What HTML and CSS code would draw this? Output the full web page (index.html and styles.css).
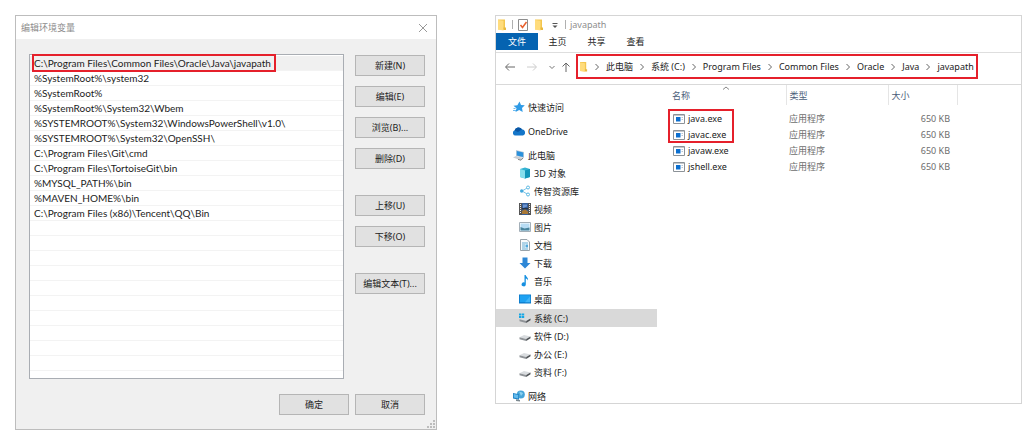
FILE: index.html
```html
<!DOCTYPE html>
<html lang="zh-CN">
<head>
<meta charset="utf-8">
<title>编辑环境变量</title>
<link rel="stylesheet" href="styles.css">
</head>
<body>
<svg class="defs" aria-hidden="true">
  <defs>
    <symbol id="folder" viewBox="0 0 12 12">
      <path d="M2 0.500h7v10H2z" fill="#f3c64f"/><path d="M2 1l5.500.8v9.700L2 10.500z" fill="#ffdc7c"/><path d="M7.500 8.500h2.500v2.500H7.500z" fill="#e9b93f"/>
    </symbol>
    <symbol id="drive" viewBox="0 0 12 12">
      <path d="M.5 7.200L5 5l6.500 1.600-4.300 2.400z" fill="#d9dcdf"/><path d="M.5 7.200l6.700 1.800v2L.5 9.200z" fill="#8f9397"/><path d="M7.200 9l4.300-2.400v1.700L7.200 11z" fill="#4c5054"/>
    </symbol>
    <symbol id="exe" viewBox="0 0 12 12">
      <path d="M.5 1.500h11v9H.5z" fill="#fff" stroke="#8c9298"/><path d="M1 2h10v1H1z" fill="#c3c8cc"/><path d="M3 4h4.500v4.500H3z" fill="#0b6fd0"/><path d="M8.500 4.500h1.500M8.500 6.500h1.500" stroke="#b9c6d2"/>
    </symbol>
    <symbol id="chev" viewBox="0 0 6 8"><path d="M1.500 1l3 3-3 3" fill="none" stroke="#666" stroke-width="1"/></symbol>
  </defs>
</svg>
<main class="page">
  <section class="dialog" aria-label="编辑环境变量">
    <header class="dialog-title">
      <h1>编辑环境变量</h1>
      <button class="close" type="button" aria-label="关闭"><svg viewBox="0 0 10 10"><path d="M1 1l8 8M9 1L1 9" stroke="#999" fill="none"/></svg></button>
    </header>
    <div class="dialog-body">
      <ul class="paths">
        <li class="selected"><span class="marked">C:\Program Files\Common Files\Oracle\Java\javapath</span></li>
        <li>%SystemRoot%\system32</li>
        <li>%SystemRoot%</li>
        <li>%SystemRoot%\System32\Wbem</li>
        <li>%SYSTEMROOT%\System32\WindowsPowerShell\v1.0\</li>
        <li>%SYSTEMROOT%\System32\OpenSSH\</li>
        <li>C:\Program Files\Git\cmd</li>
        <li>C:\Program Files\TortoiseGit\bin</li>
        <li>%MYSQL_PATH%\bin</li>
        <li>%MAVEN_HOME%\bin</li>
        <li>C:\Program Files (x86)\Tencent\QQ\Bin</li>
        <li></li><li></li><li></li><li></li><li></li><li></li><li></li><li></li><li></li><li></li>
      </ul>
      <div class="actions">
        <div class="group">
          <button class="btn" type="button">新建(N)</button>
          <button class="btn" type="button">编辑(E)</button>
          <button class="btn" type="button">浏览(B)...</button>
          <button class="btn" type="button">删除(D)</button>
        </div>
        <div class="group">
          <button class="btn" type="button">上移(U)</button>
          <button class="btn" type="button">下移(O)</button>
        </div>
        <div class="group">
          <button class="btn" type="button">编辑文本(T)...</button>
        </div>
      </div>
    </div>
    <footer class="dialog-foot">
      <button class="btn" type="button">确定</button>
      <button class="btn" type="button">取消</button>
    </footer>
    <svg class="grip" viewBox="0 0 8 8" aria-hidden="true"><path d="M6 0h2v2H6zM3 3h2v2H3zM6 3h2v2H6zM0 6h2v2H0zM3 6h2v2H3zM6 6h2v2H6z" fill="#bdbdbd"/></svg>
  </section>

  <section class="explorer" aria-label="javapath">
    <header class="caption">
      <svg class="icon"><use href="#folder"/></svg>
      <span class="bar"></span>
      <svg class="icon" viewBox="0 0 12 12"><path d="M1.500.5h9v11h-9z" fill="#fff" stroke="#8d8d8d"/><path d="M3.500 6l2 2.500L9.500 3" fill="none" stroke="#e8602c" stroke-width="1.500"/></svg>
      <svg class="icon"><use href="#folder"/></svg>
      <svg class="icon" viewBox="0 0 12 12"><path d="M3.500 4.500h5" stroke="#555"/><path d="M3.500 6.500h5L6 9z" fill="#555"/></svg>
      <span class="bar"></span>
      <h2>javapath</h2>
    </header>
    <div class="tabs">
      <button class="tab active" type="button">文件</button>
      <button class="tab" type="button">主页</button>
      <button class="tab" type="button">共享</button>
      <button class="tab" type="button">查看</button>
    </div>
    <div class="address">
      <div class="history">
        <button type="button" aria-label="后退"><svg viewBox="0 0 12 12"><path d="M11 6H2M5 2.500L1.500 6 5 9.500" fill="none" stroke="#666"/></svg></button>
        <button type="button" aria-label="前进"><svg viewBox="0 0 12 12"><path d="M1 6h9M7 2.500L10.500 6 7 9.500" fill="none" stroke="#ccc"/></svg></button>
        <button type="button" class="small" aria-label="最近"><svg viewBox="0 0 8 12"><path d="M1.500 5L4 7.500 6.500 5" fill="none" stroke="#777"/></svg></button>
        <button type="button" aria-label="向上"><svg viewBox="0 0 12 12"><path d="M6 11V2M2.500 5.500L6 2l3.500 3.500" fill="none" stroke="#666"/></svg></button>
      </div>
      <nav class="crumbs" aria-label="路径">
        <svg class="icon" viewBox="2 0 9 12"><use href="#folder" width="12" height="12"/></svg>
        <svg class="chev"><use href="#chev"/></svg><a href="#">此电脑</a>
        <svg class="chev"><use href="#chev"/></svg><a href="#">系统 (C:)</a>
        <svg class="chev"><use href="#chev"/></svg><a href="#">Program Files</a>
        <svg class="chev"><use href="#chev"/></svg><a href="#">Common Files</a>
        <svg class="chev"><use href="#chev"/></svg><a href="#">Oracle</a>
        <svg class="chev"><use href="#chev"/></svg><a href="#">Java</a>
        <svg class="chev"><use href="#chev"/></svg><a href="#">javapath</a>
      </nav>
    </div>
    <div class="content">
      <nav class="tree" aria-label="导航">
        <a class="root" href="#"><svg class="icon" viewBox="0 0 12 12"><path d="M6.500.5L8 4l3.800.3L9 7l.7 4L6.200 9 2.500 11l1-3.800L.5 4.800l3.900-.6z" fill="#2f9be6"/><path d="M0 9.500h3M.5 7.500h2" stroke="#6fbbef"/></svg>快速访问</a>
        <a class="root" href="#"><svg class="icon" viewBox="0 0 12 12"><path d="M2.500 10.500A2.600 2.600 0 0 1 1.500 5.500 4.200 4.200 0 0 1 9 4.300 3.200 3.200 0 0 1 10 10.500z" fill="#1476c9"/><path d="M1.500 5.500A4.200 4.200 0 0 1 9 4.300L5 7z" fill="#0a56a4"/></svg>OneDrive</a>
        <div class="branch">
          <a class="root" href="#"><svg class="icon" viewBox="0 0 12 12"><path d="M3 1l8 2v6L3 7z" fill="#b9cad8"/><path d="M3.800 2l6.400 1.600v4.500L3.800 6.500z" fill="#2a91dc"/><path d="M0 8.500L3 7l7 2-2 2.200z" fill="#c9ced3"/><path d="M5 10.400l3 .8L10 9" fill="none" stroke="#888"/></svg>此电脑</a>
          <a href="#"><svg class="icon" viewBox="0 0 12 12"><path d="M1 2l5-1.500L11 2v8l-5 1.500L1 10z" fill="#35b3d3"/><path d="M1 2l5 1.500v8L1 10z" fill="#86deec"/><path d="M6 3.500L11 2v8l-5 1.500z" fill="#1295b8"/></svg>3D 对象</a>
          <a href="#"><svg class="icon" viewBox="0 0 12 12"><path d="M9 2.500L3 6l6 3.500" fill="none" stroke="#7cc5e8"/><circle cx="2.700" cy="6" r="1.700" fill="#43a9dc"/><circle cx="9" cy="2.500" r="1.500" fill="#fff" stroke="#5bb9e3"/><circle cx="9" cy="9.500" r="1.500" fill="#fff" stroke="#5bb9e3"/></svg>传智资源库</a>
          <a href="#"><svg class="icon" viewBox="0 0 12 12"><path d="M0 0h12v12H0z" fill="#555"/><path d="M3 0h6v12H3z" fill="#345f9c"/><path d="M4 1.500h4v2L4 5z" fill="#6d95d2"/><path d="M3 8l3-2 3 2.500V11H3z" fill="#a87836"/><path d="M1.500 1v10M10.500 1v10" stroke="#eee" stroke-dasharray="1 1"/><path d="M3 5.800h6" stroke="#222"/></svg>视频</a>
          <a href="#"><svg class="icon" viewBox="0 0 12 12"><path d="M.5 1.500h11v9H.5z" fill="#fff" stroke="#a3afb8"/><path d="M1.500 2.500h9v7h-9z" fill="#b7dcf4"/><path d="M1.500 6l4 1.500 5-1v3h-9z" fill="#48849d"/></svg>图片</a>
          <a href="#"><svg class="icon" viewBox="0 0 12 12"><path d="M1.500.5H8L10.500 3v8.500h-9z" fill="#f8fafb" stroke="#99a3aa"/><path d="M3 4h6M3 6h3M3 8h3M3 10h6" stroke="#67acd3"/><path d="M6.500 5.500H9v3H6.500z" fill="#4ea8dc"/></svg>文档</a>
          <a href="#"><svg class="icon" viewBox="0 0 12 12"><path d="M3.500.5h5V6h3L6 11.500.5 6h3z" fill="#2d87d6"/></svg>下载</a>
          <a href="#"><svg class="icon" viewBox="0 0 12 12"><path d="M5.500 0h1.200c.3 2 3 2.500 2.300 5.500-.4-1.300-1.200-1.800-2.200-2v6a2.100 2 0 1 1-1.300-2z" fill="#158fe0"/></svg>音乐</a>
          <a href="#"><svg class="icon" viewBox="0 0 12 12"><path d="M0 1.500h12v9H0z" fill="#0b78c8"/><path d="M.8 2.200h10.400v7H.8z" fill="#1fa2f2"/><path d="M6 9.200l5.200-6v6z" fill="#43b6f8"/></svg>桌面</a>
          <div class="drives">
            <a class="current" href="#"><svg class="icon" viewBox="0 0 12 12"><use href="#drive" width="12" height="12"/><path d="M0 0h5.700v6.500H0z" fill="#d9d9d9"/><path d="M0 1.500h2.300v2H0zM2.800 1.500h2.400v2H2.800zM0 4h2.300v2H0zM2.800 4h2.400v2H2.800z" fill="#16a7e5"/></svg>系统 (C:)</a>
            <a href="#"><svg class="icon"><use href="#drive"/></svg>软件 (D:)</a>
            <a href="#"><svg class="icon"><use href="#drive"/></svg>办公 (E:)</a>
            <a href="#"><svg class="icon"><use href="#drive"/></svg>资料 (F:)</a>
          </div>
        </div>
        <a class="root" href="#"><svg class="icon" viewBox="0 0 12 12"><circle cx="7.800" cy="4.500" r="4" fill="#46a5d8"/><path d="M6 1.500c2 1 3.500.5 4 2L8 6z" fill="#8bd0ef"/><path d="M0 3l6 1.200v5.500L0 8.500z" fill="#1f82c5"/><path d="M.8 4l4.400 1v3.500L.8 7.600z" fill="#64bbec"/><path d="M3 9.300v1.700l4 .5V10z" fill="#7d8990"/></svg>网络</a>
      </nav>
      <div class="files">
        <table>
          <colgroup><col class="c-name"><col class="c-type"><col class="c-size"><col></colgroup>
          <thead><tr><th class="sorted">名称<svg viewBox="0 0 8 4"><path d="M1 3.500L4 1l3 2.500" fill="none" stroke="#888"/></svg></th><th>类型</th><th>大小</th><th></th></tr></thead>
          <tbody>
            <tr><td><svg class="icon"><use href="#exe"/></svg>java.exe</td><td>应用程序</td><td>650 KB</td><td></td></tr>
            <tr><td><svg class="icon"><use href="#exe"/></svg>javac.exe</td><td>应用程序</td><td>650 KB</td><td></td></tr>
            <tr><td><svg class="icon"><use href="#exe"/></svg>javaw.exe</td><td>应用程序</td><td>650 KB</td><td></td></tr>
            <tr><td><svg class="icon"><use href="#exe"/></svg>jshell.exe</td><td>应用程序</td><td>650 KB</td><td></td></tr>
          </tbody>
        </table>
        <div class="highlight"></div>
      </div>
    </div>
  </section>
</main>
</body>
</html>
```

FILE: styles.css
```css
* { box-sizing: border-box; }
body {
  margin: 0;
  background: #fff;
  color: #1c1c1c;
  font: 9px/15px "Noto Sans", "Noto Sans CJK SC", sans-serif;
}
.defs { position: absolute; width: 0; height: 0; }
button { margin: 0; padding: 0; border: 0; background: none; color: inherit; font: inherit; }
a { color: inherit; text-decoration: none; }
h1, h2 { margin: 0; font: inherit; }
svg { display: block; flex: none; }
.icon { width: 12px; height: 12px; }

.page {
  display: grid;
  grid-template-columns: 422fr 527fr;
  gap: 58px;
  align-items: start;
  padding: 15px 13px 2px 15px;
}

.dialog { position: relative; border: 1px solid #bdbdbd; background: #f0f0f0; }
.dialog-title {
  display: flex;
  align-items: center;
  justify-content: space-between;
  height: 23px;
  padding: 0 8px 0 5px;
  background: #fff;
  color: #8c8c8c;
}
.close svg { width: 10px; height: 10px; }
.dialog-body {
  display: grid;
  grid-template-columns: 1fr 70px;
  gap: 11px;
  padding: 15px 11px 15px 13px;
}
.paths {
  margin: 0;
  padding: 1px 0 7px;
  border: 1px solid #a9adb3;
  background: #fff;
  font-family: Lato, "Noto Sans CJK SC", sans-serif;
  font-size: 10px;
  list-style: none;
}
.paths li { height: 15px; padding-left: 4px; border-bottom: 1px solid #f3f3f3; line-height: 15px; white-space: nowrap; }
.paths .selected { background: #f0f0f0; }
.marked { display: inline-block; height: 14px; padding-right: 3px; outline: 2px solid #e5202b; }
.actions { display: flex; flex-direction: column; gap: 26px; padding-top: 1px; }
.group { display: flex; flex-direction: column; gap: 10px; }
.btn { width: 70px; height: 21px; border: 1px solid #b5b5b5; background: #e1e1e1; text-align: center; }
.dialog-foot { display: flex; justify-content: flex-end; gap: 6px; padding: 0 11px 14px; }
.grip { position: absolute; right: 1px; bottom: 1px; width: 8px; height: 8px; }

.explorer { border: 1px solid #d5d5d5; background: #fff; }
.caption { display: flex; align-items: center; gap: 4px; height: 17px; color: #8e8e8e; }
.bar { width: 1px; height: 9px; background: #b0b0b0; }
.tabs { display: flex; height: 20px; border-bottom: 1px solid #dedede; }
.tab { width: 39px; height: 17px; }
.tab.active { width: 42px; background: #0563b1; color: #fff; }
.address { display: flex; align-items: center; padding: 1px 0 5px; border-bottom: 1px solid #d9d9d9; }
.history { display: flex; align-items: center; gap: 10px; width: 80px; padding-left: 8px; }
.history svg { width: 12px; height: 12px; }
.history .small { margin-right: -6px; }
.history .small svg { width: 8px; }
.crumbs { display: flex; align-items: center; gap: 6px; height: 25px; padding: 0 2px; border: 2px solid #e5202b; white-space: nowrap; }
.crumbs .icon { width: 8px; }
.chev { width: 6px; height: 8px; }

.content { display: grid; grid-template-columns: 161px 1fr; }
.tree { display: flex; flex-direction: column; gap: 6px; height: 318px; padding-top: 13px; overflow: hidden; }
.tree a { display: flex; flex: none; align-items: center; gap: 3px; height: 18px; padding-left: 23px; }
.tree .root { padding-left: 17px; }
.drives { padding-top: 1px; }
.tree .current { background: #d9d9d9; }

.files { position: relative; padding-left: 4px; }
table { width: 100%; border-collapse: collapse; table-layout: fixed; }
.c-name { width: 125px; }
.c-type { width: 102px; }
.c-size { width: 69px; }
th { position: relative; height: 20px; padding: 0 0 0 11px; border-right: 1px solid #e5e5e5; color: #4c607a; font-weight: normal; text-align: left; }
th:not(.sorted), td:nth-child(2) { padding-left: 3px; }
th:last-child { border-right: 0; }
.sorted svg { position: absolute; top: 1px; left: 61px; width: 8px; height: 4px; }
td { height: 16px; padding: 0; color: #6d6d6d; line-height: 16px; white-space: nowrap; }
td:first-child { display: flex; align-items: center; gap: 3px; padding-left: 12px; color: #1c1c1c; }
td:nth-child(3) { padding-right: 7px; text-align: right; }
tbody::before { content: ""; display: block; height: 6px; }
.highlight { position: absolute; top: 24px; left: 11px; width: 66px; height: 34px; border: 2px solid #e5202b; }
```
